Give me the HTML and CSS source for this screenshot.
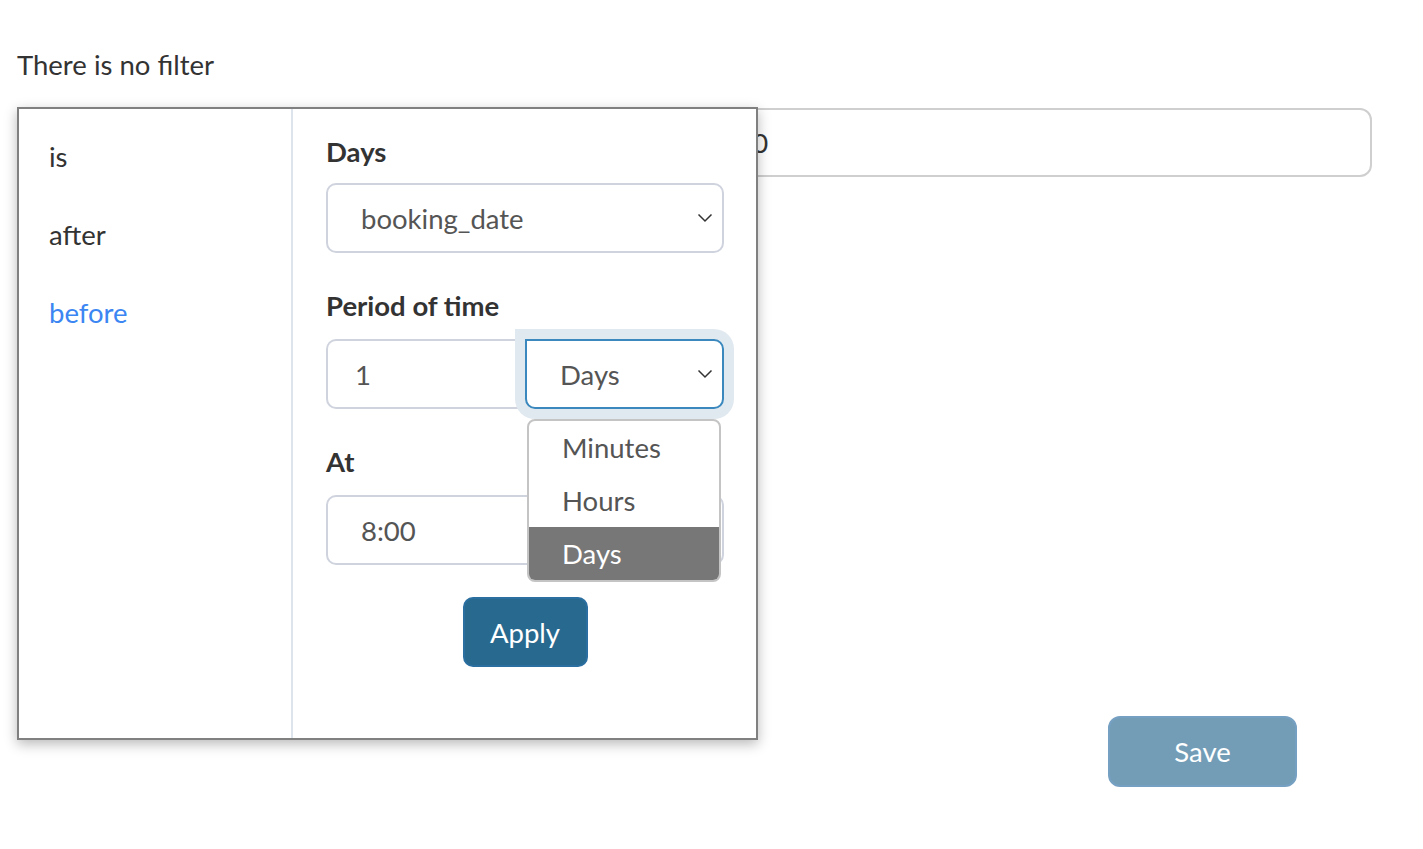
FILE: index.html
```html
<!DOCTYPE html>
<html lang="en">
<head>
<meta charset="utf-8">
<title>Filter</title>
<link rel="stylesheet" href="styles.css">
</head>
<body>
<div class="page">
  <p class="status">There is no filter</p>
  <div class="field-wrap">
    <div class="fake-input"><span class="fake-text">booking_date before 1 Days at 8:00</span></div>
    <div class="popover">
      <ul class="ops">
        <li class="op">is</li>
        <li class="op">after</li>
        <li class="op active">before</li>
      </ul>
      <div class="form">
        <div class="group first">
          <div class="label">Days</div>
          <div class="select full">
            <span>booking_date</span>
            <svg class="chev" viewBox="0 0 16 10" width="16" height="10"><path d="M1.5 1.5 L8 8 L14.5 1.5" fill="none" stroke="#333" stroke-width="1.5"/></svg>
          </div>
        </div>
        <div class="group">
          <div class="label">Period of time</div>
          <div class="row">
            <div class="input left">1</div>
            <div class="unit-wrap">
              <div class="select right focus">
                <span>Days</span>
                <svg class="chev" viewBox="0 0 16 10" width="16" height="10"><path d="M1.5 1.5 L8 8 L14.5 1.5" fill="none" stroke="#333" stroke-width="1.5"/></svg>
              </div>
              <ul class="menu">
                <li class="opt">Minutes</li>
                <li class="opt">Hours</li>
                <li class="opt sel">Days</li>
              </ul>
            </div>
          </div>
        </div>
        <div class="group">
          <div class="label">At</div>
          <div class="input full time">8:00</div>
        </div>
        <div class="btn-row">
          <button class="apply">Apply</button>
        </div>
      </div>
    </div>
  </div>
  <div class="actions">
    <button class="save">Save</button>
  </div>
</div>
</body>
</html>
```

FILE: styles.css
```css
* { box-sizing: border-box; }
html, body { margin: 0; padding: 0; background: #fff; }
body {
  font-family: Lato, "Noto Sans", sans-serif;
  font-size: 27.5px;
  color: #333;
}
.page {
  padding: 49px 51px 0 17px;
  height: 849px;
  overflow: hidden;
}
.status {
  margin: 0;
  line-height: 32px;
  color: #333;
}
.field-wrap {
  position: relative;
  margin-top: 27px;
  height: 608px;
}
.fake-input {
  height: 69px;
  border: 2px solid #cfcfcf;
  border-radius: 12px;
  display: flex;
  align-items: center;
  padding-left: 319px;
  color: #333;
}
.popover {
  position: absolute;
  top: -1px;
  left: 0;
  width: 741px;
  height: 633px;
  background: #fff;
  border: 2px solid #808080;
  box-shadow: 0 4px 12px rgba(0,0,0,0.28);
  display: flex;
  z-index: 2;
}
.ops {
  list-style: none;
  margin: 0;
  padding: 9px 0 0;
  width: 274px;
  border-right: 2px solid #dde4ec;
}
.op {
  height: 78px;
  line-height: 78px;
  padding-left: 30px;
  color: #333;
}
.op.active { color: #3b86f2; }
.form {
  flex: 1;
  padding: 27px 32px 0 33px;
}
.group { margin-bottom: 37px; }
.label {
  font-weight: 700;
  line-height: 32px;
  margin-bottom: 17px;
  color: #333;
}
.group.first .label { margin-bottom: 15px; }
.select, .input {
  height: 70px;
  border: 2px solid #cfd3de;
  background: #fff;
  color: #555;
  display: flex;
  align-items: center;
}
.select {
  justify-content: space-between;
  padding: 0 9px 0 33px;
}
.full { border-radius: 10px; width: 100%; }
.chev { flex: none; }
.row { display: flex; }
.input.left {
  width: 199px;
  border-radius: 10px 0 0 10px;
  border-right: none;
  padding-left: 27px;
}
.input.time { padding-left: 33px; }
.unit-wrap {
  position: relative;
  flex: 1;
}
.select.right {
  border-radius: 0 10px 10px 0;
}
.select.focus {
  border-color: #3a88be;
  box-shadow: 0 0 0 10px #e1e9f0;
  border-radius: 0 10px 10px 10px;
}
.menu {
  position: absolute;
  top: 80px;
  left: 2px;
  width: 194px;
  margin: 0;
  padding: 0;
  list-style: none;
  background: #fff;
  border: 2px solid #c4c4c4;
  border-radius: 8px;
  overflow: hidden;
  z-index: 3;
}
.opt {
  height: 53px;
  line-height: 53px;
  padding-left: 33px;
  color: #555;
}
.opt.sel {
  background: #777;
  color: #fff;
}
.btn-row {
  display: flex;
  justify-content: center;
  margin-top: -5px;
}
button {
  font-family: inherit;
  font-size: 27.5px;
  color: #fff;
  cursor: pointer;
}
.apply {
  width: 125px;
  height: 70px;
  background: #27698f;
  border: 2px solid #2b6ea0;
  border-radius: 10px;
}
.actions {
  display: flex;
  justify-content: flex-end;
  padding-right: 75px;
}
.save {
  width: 189px;
  height: 71px;
  background: #739db7;
  border: 2px solid #76a0c2;
  border-radius: 12px;
}
```
